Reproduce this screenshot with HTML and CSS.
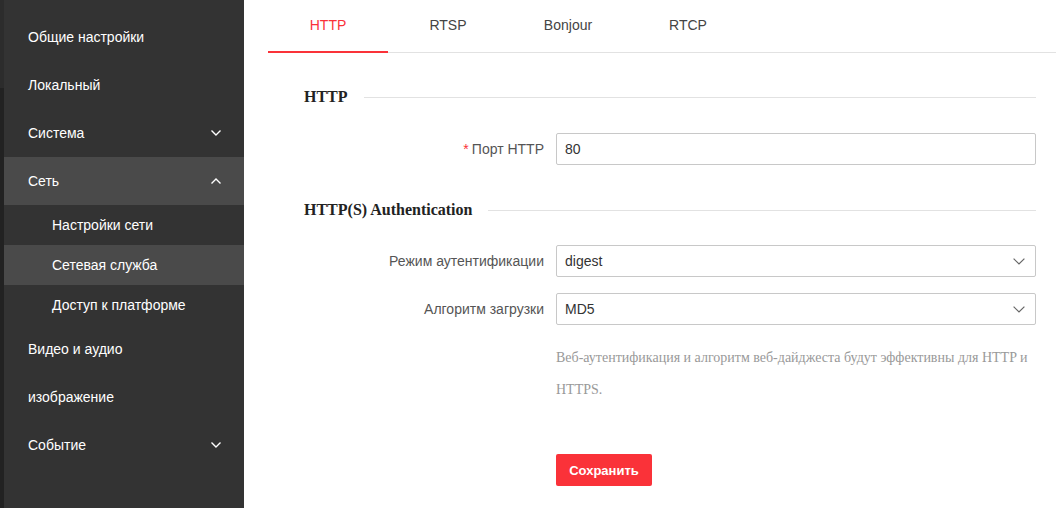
FILE: index.html
```html
<!DOCTYPE html>
<html lang="ru">
<head>
<meta charset="utf-8">
<title>Сетевая служба</title>
<link rel="stylesheet" href="styles.css">
</head>
<body>
<div class="app">
  <div class="edge"><div class="edge-top"></div></div>
  <nav class="sidebar">
    <div class="nav-item">Общие настройки</div>
    <div class="nav-item">Локальный</div>
    <div class="nav-item">Система
      <svg class="chev" viewBox="0 0 10 6" width="10" height="6"><path d="M0.5 0.5 L5 5 L9.5 0.5" fill="none" stroke="#fff" stroke-width="1.4"/></svg>
    </div>
    <div class="nav-item open">Сеть
      <svg class="chev" viewBox="0 0 10 6" width="10" height="6"><path d="M0.5 5.5 L5 1 L9.5 5.5" fill="none" stroke="#fff" stroke-width="1.4"/></svg>
    </div>
    <div class="sub-item">Настройки сети</div>
    <div class="sub-item active">Сетевая служба</div>
    <div class="sub-item">Доступ к платформе</div>
    <div class="nav-item">Видео и аудио</div>
    <div class="nav-item">изображение</div>
    <div class="nav-item">Событие
      <svg class="chev" viewBox="0 0 10 6" width="10" height="6"><path d="M0.5 0.5 L5 5 L9.5 0.5" fill="none" stroke="#fff" stroke-width="1.4"/></svg>
    </div>
  </nav>
  <main class="content">
    <div class="tabs">
      <div class="tab active">HTTP</div>
      <div class="tab">RTSP</div>
      <div class="tab">Bonjour</div>
      <div class="tab">RTCP</div>
    </div>
    <section class="section">
      <div class="sec-head first"><span>HTTP</span><i class="rule"></i></div>
      <div class="row port-row">
        <label class="label"><span class="req">*</span>Порт HTTP</label>
        <div class="field">80</div>
      </div>
      <div class="sec-head second"><span>HTTP(S) Authentication</span><i class="rule"></i></div>
      <div class="row">
        <label class="label">Режим аутентификации</label>
        <div class="field select">digest
          <svg class="sel-chev" viewBox="0 0 12 7" width="12" height="7"><path d="M0.6 0.6 L6 6 L11.4 0.6" fill="none" stroke="#666" stroke-width="1.2"/></svg>
        </div>
      </div>
      <div class="row gap">
        <label class="label">Алгоритм загрузки</label>
        <div class="field select">MD5
          <svg class="sel-chev" viewBox="0 0 12 7" width="12" height="7"><path d="M0.6 0.6 L6 6 L11.4 0.6" fill="none" stroke="#666" stroke-width="1.2"/></svg>
        </div>
      </div>
      <div class="row help-row">
        <div class="label-spacer"></div>
        <p class="help">Веб-аутентификация и алгоритм веб-дайджеста будут эффективны для HTTP и HTTPS.</p>
      </div>
      <div class="row btn-row">
        <div class="label-spacer"></div>
        <button class="save">Сохранить</button>
      </div>
    </section>
  </main>
</div>
</body>
</html>
```

FILE: styles.css
```css
* { box-sizing: border-box; }
html, body { margin: 0; padding: 0; }
body {
  width: 1056px;
  height: 508px;
  overflow: hidden;
  font-family: "Liberation Sans", Arial, sans-serif;
  font-size: 14px;
  background: #fff;
}
.app {
  display: flex;
  height: 508px;
}
.edge {
  width: 4px;
  background: #222;
  flex: none;
}
.edge-top {
  height: 88px;
  background: #2c2c2c;
}
.sidebar {
  width: 240px;
  flex: none;
  background: #333;
  padding-top: 13px;
  color: #fff;
}
.nav-item {
  height: 48px;
  display: flex;
  align-items: center;
  justify-content: space-between;
  padding: 0 23px 0 24px;
}
.nav-item.open { background: #4a4a4a; }
.sub-item {
  height: 40px;
  display: flex;
  align-items: center;
  padding-left: 48px;
}
.sub-item.active { background: #4a4a4a; }
.chev { display: block; }

.content {
  flex: 1;
  padding-left: 24px;
}
.tabs {
  display: flex;
  height: 53px;
  border-bottom: 1px solid #e2e2e2;
}
.tab {
  width: 120px;
  height: 53px;
  margin-bottom: -1px;
  display: flex;
  align-items: center;
  justify-content: center;
  padding-bottom: 1px;
  color: #444;
  border-bottom: 2px solid transparent;
}
.tab.active {
  color: #fa3239;
  border-bottom-color: #fa3239;
}
.section {
  padding: 0 20px 0 36px;
}
.sec-head {
  display: flex;
  align-items: center;
  height: 22px;
  font-family: "Liberation Serif", "Times New Roman", serif;
  font-weight: bold;
  font-size: 16px;
  color: #222;
}
.sec-head.first { margin-top: 33px; }
.sec-head.second { margin-top: 34px; }
.sec-head .rule {
  flex: 1;
  height: 1px;
  background: #e2e2e2;
  margin-left: 16px;
}
.row {
  display: flex;
  align-items: center;
  margin-top: 24px;
}
.row.port-row { margin-top: 25px; }
.row.gap { margin-top: 16px; }
.label, .label-spacer {
  width: 240px;
  flex: none;
  margin-right: 12px;
}
.label {
  text-align: right;
  color: #555;
}
.req {
  color: #fa3239;
  margin-right: 3px;
}
.field {
  width: 480px;
  height: 32px;
  border: 1px solid #c8c8c8;
  border-radius: 2px;
  padding: 0 8px;
  display: flex;
  align-items: center;
  justify-content: space-between;
  color: #333;
}
.field.select { padding-right: 10px; }
.sel-chev { display: block; }
.help-row { margin-top: 17px; align-items: flex-start; }
.help {
  width: 480px;
  margin: 0;
  font-family: "Liberation Serif", "Times New Roman", serif;
  font-size: 14px;
  line-height: 32px;
  color: #999;
}
.btn-row { margin-top: 48px; }
.save {
  width: 96px;
  height: 32px;
  border: none;
  border-radius: 2px;
  background: #fa3239;
  color: #fff;
  font-family: "Liberation Sans", Arial, sans-serif;
  font-weight: bold;
  font-size: 13px;
  padding: 0;
}
```
